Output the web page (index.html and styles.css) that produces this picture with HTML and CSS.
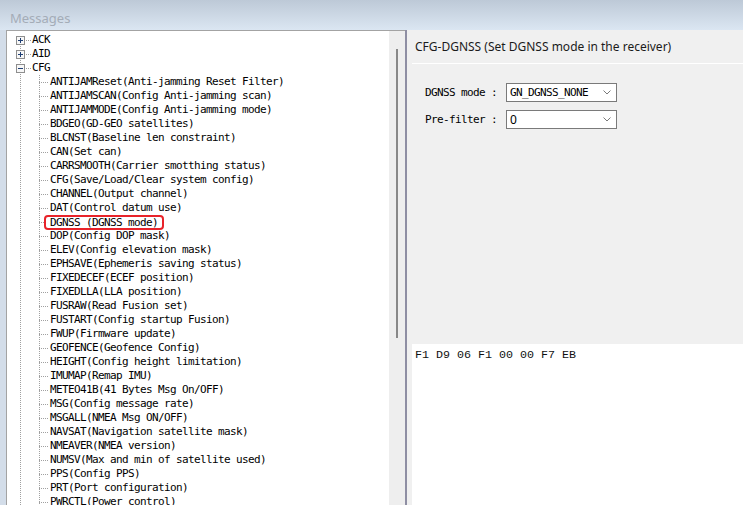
FILE: index.html
```html
<!DOCTYPE html>
<html>
<head>
<meta charset="utf-8">
<link rel="stylesheet" href="styles.css">
</head>
<body>
<div class="titlebar"><span class="title">Messages</span></div>
<div class="main">
  <div class="tree-panel">
    <div class="tree">
      <div class="node root"><svg class="exp" width="9" height="9" viewBox="0 0 9 9"><rect x="0.5" y="0.5" width="8" height="8" fill="#f7f7f7" stroke="#8e8e8e"/><path d="M2 4.5h5M4.5 2v5" stroke="#1f3f74"/></svg><span class="hconn"></span><span class="label">ACK</span></div>
      <div class="node root"><svg class="exp" width="9" height="9" viewBox="0 0 9 9"><rect x="0.5" y="0.5" width="8" height="8" fill="#f7f7f7" stroke="#8e8e8e"/><path d="M2 4.5h5M4.5 2v5" stroke="#1f3f74"/></svg><span class="hconn"></span><span class="label">AID</span></div>
      <div class="node root"><svg class="exp" width="9" height="9" viewBox="0 0 9 9"><rect x="0.5" y="0.5" width="8" height="8" fill="#f7f7f7" stroke="#8e8e8e"/><path d="M2 4.5h5" stroke="#1f3f74"/></svg><span class="hconn"></span><span class="label">CFG</span></div>
      <div class="children">
        <div class="node child"><span class="cconn"></span><span class="label">ANTIJAMReset(Anti-jamming Reset Filter)</span></div>
        <div class="node child"><span class="cconn"></span><span class="label">ANTIJAMSCAN(Config Anti-jamming scan)</span></div>
        <div class="node child"><span class="cconn"></span><span class="label">ANTIJAMMODE(Config Anti-jamming mode)</span></div>
        <div class="node child"><span class="cconn"></span><span class="label">BDGEO(GD-GEO satellites)</span></div>
        <div class="node child"><span class="cconn"></span><span class="label">BLCNST(Baseline len constraint)</span></div>
        <div class="node child"><span class="cconn"></span><span class="label">CAN(Set can)</span></div>
        <div class="node child"><span class="cconn"></span><span class="label">CARRSMOOTH(Carrier smotthing status)</span></div>
        <div class="node child"><span class="cconn"></span><span class="label">CFG(Save/Load/Clear system config)</span></div>
        <div class="node child"><span class="cconn"></span><span class="label">CHANNEL(Output channel)</span></div>
        <div class="node child"><span class="cconn"></span><span class="label">DAT(Control datum use)</span></div>
        <div class="node child"><span class="cconn"></span><span class="label hl">DGNSS (DGNSS mode)</span></div>
        <div class="node child"><span class="cconn"></span><span class="label">DOP(Config DOP mask)</span></div>
        <div class="node child"><span class="cconn"></span><span class="label">ELEV(Config elevation mask)</span></div>
        <div class="node child"><span class="cconn"></span><span class="label">EPHSAVE(Ephemeris saving status)</span></div>
        <div class="node child"><span class="cconn"></span><span class="label">FIXEDECEF(ECEF position)</span></div>
        <div class="node child"><span class="cconn"></span><span class="label">FIXEDLLA(LLA position)</span></div>
        <div class="node child"><span class="cconn"></span><span class="label">FUSRAW(Read Fusion set)</span></div>
        <div class="node child"><span class="cconn"></span><span class="label">FUSTART(Config startup Fusion)</span></div>
        <div class="node child"><span class="cconn"></span><span class="label">FWUP(Firmware update)</span></div>
        <div class="node child"><span class="cconn"></span><span class="label">GEOFENCE(Geofence Config)</span></div>
        <div class="node child"><span class="cconn"></span><span class="label">HEIGHT(Config height limitation)</span></div>
        <div class="node child"><span class="cconn"></span><span class="label">IMUMAP(Remap IMU)</span></div>
        <div class="node child"><span class="cconn"></span><span class="label">METEO41B(41 Bytes Msg On/OFF)</span></div>
        <div class="node child"><span class="cconn"></span><span class="label">MSG(Config message rate)</span></div>
        <div class="node child"><span class="cconn"></span><span class="label">MSGALL(NMEA Msg ON/OFF)</span></div>
        <div class="node child"><span class="cconn"></span><span class="label">NAVSAT(Navigation satellite mask)</span></div>
        <div class="node child"><span class="cconn"></span><span class="label">NMEAVER(NMEA version)</span></div>
        <div class="node child"><span class="cconn"></span><span class="label">NUMSV(Max and min of satellite used)</span></div>
        <div class="node child"><span class="cconn"></span><span class="label">PPS(Config PPS)</span></div>
        <div class="node child"><span class="cconn"></span><span class="label">PRT(Port configuration)</span></div>
        <div class="node child"><span class="cconn"></span><span class="label">PWRCTL(Power control)</span></div>
      </div>
    </div>
    <div class="vscroll"><div class="thumb"></div></div>
  </div>
  <div class="splitter"></div>
  <div class="detail">
    <div class="detail-header">CFG-DGNSS (Set DGNSS mode in the receiver)</div>
    <div class="form">
      <div class="row">
        <span class="flabel">DGNSS mode :</span>
        <div class="combo"><span class="combo-text mono">GN_DGNSS_NONE</span><svg class="chev" width="8" height="5" viewBox="0 0 8 5"><path d="M0.5 0.5L4 4L7.5 0.5" fill="none" stroke="#7a7a7a" stroke-width="1"/></svg></div>
      </div>
      <div class="row">
        <span class="flabel">Pre-filter :</span>
        <div class="combo"><span class="combo-text sans">0</span><svg class="chev" width="8" height="5" viewBox="0 0 8 5"><path d="M0.5 0.5L4 4L7.5 0.5" fill="none" stroke="#7a7a7a" stroke-width="1"/></svg></div>
      </div>
    </div>
    <div class="hex">F1 D9 06 F1 00 00 F7 EB</div>
  </div>
</div>
</body>
</html>
```
FILE: styles.css
```css
html, body {
  margin: 0;
  padding: 0;
}
body {
  width: 743px;
  height: 505px;
  overflow: hidden;
  background: #d3dde9;
  font-family: "Liberation Mono", monospace;
  color: #000;
}
.titlebar {
  height: 30px;
  box-sizing: border-box;
  padding: 10px 0 0 10px;
  background: linear-gradient(#bdc9d7, #dbe6f2);
}
.title {
  font-family: "Noto Sans", sans-serif;
  font-size: 13px;
  line-height: 16px;
  color: #a4acb7;
  display: block;
}
.main {
  display: flex;
  height: 475px;
  padding-left: 6px;
}
.tree-panel {
  display: flex;
  width: 399px;
  box-sizing: border-box;
  border-top: 1px solid #a3a3a3;
  border-left: 1px solid #a3a3a3;
}
.tree {
  width: 382px;
  flex: none;
  padding-top: 2px;
  overflow: hidden;
  background: #fff repeating-linear-gradient(to bottom, #a0a0a0 0 1px, transparent 1px 2px) 13px 9px / 1px 2000px no-repeat;
}
.children {
  background: repeating-linear-gradient(to bottom, #a0a0a0 0 1px, transparent 1px 2px) 32px 0 / 1px 2000px no-repeat;
}
.node {
  display: flex;
  align-items: center;
  height: 14px;
  white-space: nowrap;
}
.root {
  padding-left: 9px;
}
.child {
  padding-left: 32px;
}
.exp {
  flex: none;
  display: block;
}
.hconn {
  flex: none;
  width: 7px;
  height: 14px;
  background: repeating-linear-gradient(to right, #a0a0a0 0 1px, transparent 1px 2px) 1px 7px / 6px 1px no-repeat;
}
.cconn {
  flex: none;
  width: 11px;
  height: 14px;
  background: repeating-linear-gradient(to right, #a0a0a0 0 1px, transparent 1px 2px) 0 7px / 10px 1px no-repeat;
}
.label, .flabel, .mono {
  font-family: "DejaVu Sans Mono", "Liberation Mono", monospace;
  font-size: 11px;
  letter-spacing: -0.62px;
  line-height: 14px;
}
.hl {
  display: inline-block;
  height: 11px;
  line-height: 11px;
  padding: 0 4px;
  margin-left: -4px;
  background: #fff;
  outline: 2px solid #e8232a;
  border-radius: 2px;
}
.vscroll {
  width: 16px;
  flex: none;
  box-sizing: border-box;
  padding: 18px 0 0 7px;
  background: #eeeeee;
}
.thumb {
  width: 2px;
  height: 289px;
  background: #888888;
}
.splitter {
  width: 2px;
  flex: none;
  background: #8e8ea3;
}
.detail {
  flex: 1;
  display: flex;
  flex-direction: column;
  padding-left: 5px;
  background: #f0f0f0;
}
.detail-header {
  font-family: "Noto Sans", sans-serif;
  font-size: 12px;
  line-height: 16px;
  color: #1b1b1b;
  padding: 9px 0 8px 3px;
  border-bottom: 1px solid #ffffff;
}
.form {
  display: flex;
  flex-direction: column;
  gap: 8px;
  padding: 19px 0 0 13px;
}
.row {
  display: flex;
  align-items: center;
  height: 19px;
}
.flabel {
  width: 81px;
  flex: none;
}
.combo {
  width: 111px;
  height: 19px;
  box-sizing: border-box;
  border: 1px solid #7a7a7a;
  background: #fff;
  display: flex;
  align-items: center;
  justify-content: space-between;
  padding: 0 5px 0 3px;
}
.sans {
  font-family: "Noto Sans", sans-serif;
  font-size: 12px;
  line-height: 14px;
}
.chev {
  display: block;
  flex: none;
}
.hex {
  margin-top: auto;
  height: 161px;
  box-sizing: border-box;
  padding: 4px 3px;
  background: #fff;
  font-family: "Liberation Mono", monospace;
  font-size: 11.67px;
  line-height: 14px;
  color: #111;
}
```
